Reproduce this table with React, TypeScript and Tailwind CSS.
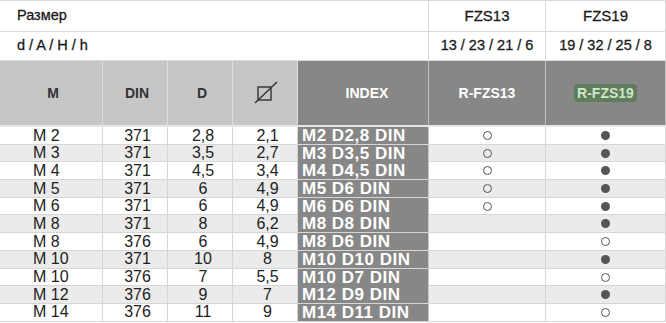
const rows = [
  { m: 'M 2', din: '371', d: '2,8', s: '2,1', index: 'M2 D2,8 DIN', a: true, b: true },
  { m: 'M 3', din: '371', d: '3,5', s: '2,7', index: 'M3 D3,5 DIN', a: true, b: true },
  { m: 'M 4', din: '371', d: '4,5', s: '3,4', index: 'M4 D4,5 DIN', a: true, b: true },
  { m: 'M 5', din: '371', d: '6', s: '4,9', index: 'M5 D6 DIN', a: true, b: true },
  { m: 'M 6', din: '371', d: '6', s: '4,9', index: 'M6 D6 DIN', a: true, b: true },
  { m: 'M 8', din: '371', d: '8', s: '6,2', index: 'M8 D8 DIN', a: false, b: true },
  { m: 'M 8', din: '376', d: '6', s: '4,9', index: 'M8 D6 DIN', a: false, b: false },
  { m: 'M 10', din: '371', d: '10', s: '8', index: 'M10 D10 DIN', a: false, b: true },
  { m: 'M 10', din: '376', d: '7', s: '5,5', index: 'M10 D7 DIN', a: false, b: false },
  { m: 'M 12', din: '376', d: '9', s: '7', index: 'M12 D9 DIN', a: false, b: true },
  { m: 'M 14', din: '376', d: '11', s: '9', index: 'M14 D11 DIN', a: false, b: false },
]

const cols = 'grid grid-cols-[103px_65px_65px_65px_131px_117px_120px]'

function Dot({ filled }: { filled: boolean }) {
  return filled ? (
    <span className="block w-[9px] h-[9px] rounded-full bg-[#555555]" />
  ) : (
    <span className="block w-[9px] h-[9px] rounded-full border-[1.75px] border-[#555555]" />
  )
}

function SquareSlash() {
  return (
    <svg width="24" height="24" viewBox="0 0 24 24" fill="none" stroke="#333" strokeWidth="1.4">
      <rect x="4" y="6" width="13" height="13" />
      <path d="M1 22L23 1" />
    </svg>
  )
}

export default function App() {
  return (
    <div className="w-[666px] h-[323px] overflow-hidden bg-white text-[#222] font-['Liberation_Sans',Arial,sans-serif]">
      <div className="border-t border-[#d9d9d9]">
        {/* size rows */}
        <div className="grid grid-cols-[429px_117px_120px] h-[31px] border-b border-[#d9d9d9] text-[14.5px] text-[#1a1a1a] [-webkit-text-stroke:0.3px]">
          <div className="flex items-center pl-[17px] border-r border-[#d9d9d9]">Размер</div>
          <div className="flex items-center justify-center border-r border-[#d9d9d9] text-[15px]">FZS13</div>
          <div className="flex items-center justify-center border-r border-[#d9d9d9] text-[15px]">FZS19</div>
        </div>
        <div className="grid grid-cols-[429px_117px_120px] h-[29px] border-b border-[#d9d9d9] text-[14.5px] text-[#1a1a1a] [-webkit-text-stroke:0.3px]">
          <div className="flex items-center pl-[17px] border-r border-[#d9d9d9]">d / A / H / h</div>
          <div className="flex items-center justify-center border-r border-[#d9d9d9]">13 / 23 / 21 / 6</div>
          <div className="flex items-center justify-center border-r border-[#d9d9d9]">19 / 32 / 25 / 8</div>
        </div>

        {/* column headers */}
        <div className={`${cols} h-[66px] border-b-2 border-[#e6e6e6] text-[14px] font-bold`}>
          <div className="flex items-center justify-center pl-[4px] bg-[#c6c6c6] border-r border-[#dcdcdc] text-[#333]">M</div>
          <div className="flex items-center justify-center pl-[4px] bg-[#c6c6c6] border-r border-[#dcdcdc] text-[#333]">DIN</div>
          <div className="flex items-center justify-center pl-[4px] bg-[#c6c6c6] border-r border-[#dcdcdc] text-[#333]">D</div>
          <div className="flex items-center justify-center pl-[2px] bg-[#c6c6c6] border-r border-[#dcdcdc]">
            <SquareSlash />
          </div>
          <div className="flex items-center justify-center pl-[8px] bg-[#878787] border-r border-[#c0c0c0] text-white">INDEX</div>
          <div className="flex items-center justify-center bg-[#878787] border-r border-[#c0c0c0] text-white">R-FZS13</div>
          <div className="flex items-center justify-center bg-[#878787] border-r border-[#c0c0c0]">
            <span className="px-[3px] rounded-[4px] bg-[#5f7c5c] text-[#cfe6c6] leading-[18px]">R-FZS19</span>
          </div>
        </div>

        {rows.map((r, i) => (
          <div
            key={i}
            className={`${cols} h-[17.7px] border-b border-[#d6d6d6] text-[16px] leading-none ${i % 2 === 0 ? 'bg-white' : 'bg-[#ebebeb]'}`}
          >
            <div className="flex items-center pl-[33px] border-r border-[#d6d6d6]">{r.m}</div>
            <div className="flex items-center justify-center pl-[5px] border-r border-[#d6d6d6]">{r.din}</div>
            <div className="flex items-center justify-center pl-[6px] border-r border-[#d6d6d6]">{r.d}</div>
            <div className="flex items-center justify-center pl-[5px] border-r border-[#d6d6d6]">{r.s}</div>
            <div className="flex items-center pl-[4px] bg-[#878787] border-r border-[#c8c8c8] text-white font-bold text-[17px] tracking-[0.5px]">
              {r.index}
            </div>
            <div className="flex items-center justify-center border-r border-[#d6d6d6]">{r.a && <Dot filled={false} />}</div>
            <div className="flex items-center justify-center border-r border-[#d6d6d6]">
              <Dot filled={r.b} />
            </div>
          </div>
        ))}
      </div>
    </div>
  )
}
